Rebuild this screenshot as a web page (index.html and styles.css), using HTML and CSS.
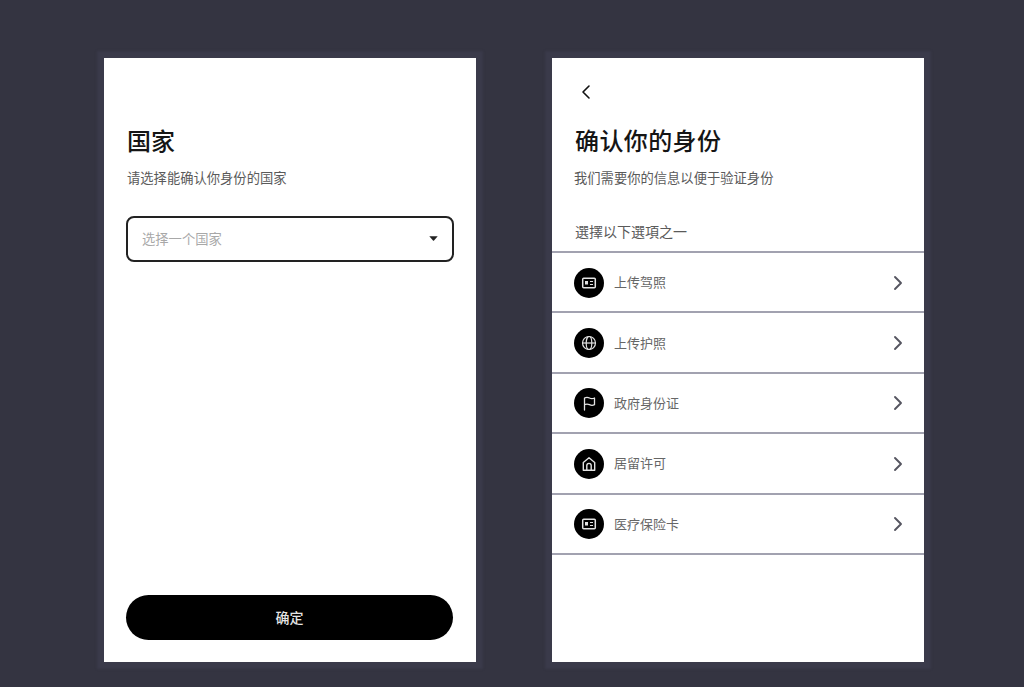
FILE: index.html
```html
<!DOCTYPE html>
<html lang="zh-CN">
<head>
<meta charset="utf-8">
<title>身份验证</title>
<link rel="stylesheet" href="styles.css">
</head>
<body>
<main class="stage">
  <section class="card card-country">
    <h1 class="title title-country">国家</h1>
    <p class="sub sub-country">请选择能确认你身份的国家</p>
    <div class="select">
      <span class="placeholder">选择一个国家</span>
      <svg class="caret" width="9" height="5" viewBox="0 0 9 5"><path d="M0.3 0.3H8.7L5 4.4Q4.5 4.9 4 4.4Z" fill="#222"/></svg>
    </div>
    <button class="primary">确定</button>
  </section>

  <section class="card card-id">
    <svg class="back" width="10" height="16" viewBox="0 0 10 16"><path d="M8 2L2 8L8 14" fill="none" stroke="#111" stroke-width="1.6" stroke-linecap="round" stroke-linejoin="round"/></svg>
    <h1 class="title title-id">确认你的身份</h1>
    <p class="sub sub-id">我们需要你的信息以便于验证身份</p>
    <h2 class="lead">選擇以下選項之一</h2>
    <ul class="list">
      <li class="row">
        <span class="badge"><svg width="16" height="16" viewBox="0 0 16 16" fill="none" stroke="#e4e4e4" stroke-width="1.5"><rect x="1.7" y="3.2" width="12.6" height="9.6" rx="1"/><rect x="4" y="6" width="3" height="3.5" fill="#e4e4e4" stroke="none"/><path d="M9 6.5H12M9 9.5H12" stroke-width="1.2"/></svg></span>
        <span class="label">上传驾照</span>
        <svg class="chev" width="10" height="16" viewBox="0 0 10 16"><path d="M2 2L8 8L2 14" fill="none" stroke="#555560" stroke-width="1.9" stroke-linecap="round" stroke-linejoin="round"/></svg>
      </li>
      <li class="row">
        <span class="badge"><svg width="16" height="16" viewBox="0 0 16 16" fill="none" stroke="#e4e4e4" stroke-width="1.2"><circle cx="8" cy="8" r="6.5"/><ellipse cx="8" cy="8" rx="2.8" ry="6.5"/><path d="M1.5 8H14.5"/></svg></span>
        <span class="label">上传护照</span>
        <svg class="chev" width="10" height="16" viewBox="0 0 10 16"><path d="M2 2L8 8L2 14" fill="none" stroke="#555560" stroke-width="1.9" stroke-linecap="round" stroke-linejoin="round"/></svg>
      </li>
      <li class="row">
        <span class="badge"><svg width="16" height="16" viewBox="0 0 16 16" fill="none" stroke="#e4e4e4" stroke-width="1.3" stroke-linejoin="round" stroke-linecap="round"><path d="M3.5 15V3Q6 1.6 8.5 3T13.5 3V9.7Q11 11 8.5 9.7T3.5 9.7"/></svg></span>
        <span class="label">政府身份证</span>
        <svg class="chev" width="10" height="16" viewBox="0 0 10 16"><path d="M2 2L8 8L2 14" fill="none" stroke="#555560" stroke-width="1.9" stroke-linecap="round" stroke-linejoin="round"/></svg>
      </li>
      <li class="row">
        <span class="badge"><svg width="16" height="16" viewBox="0 0 16 16" fill="none" stroke="#e4e4e4" stroke-width="1.4" stroke-linejoin="round"><path d="M2.3 6.5L8 1.8L13.7 6.5V14.2H2.3Z"/><path d="M5.8 14.2V9.6A2.2 2.2 0 0 1 10.2 9.6V14.2"/></svg></span>
        <span class="label">居留许可</span>
        <svg class="chev" width="10" height="16" viewBox="0 0 10 16"><path d="M2 2L8 8L2 14" fill="none" stroke="#555560" stroke-width="1.9" stroke-linecap="round" stroke-linejoin="round"/></svg>
      </li>
      <li class="row">
        <span class="badge"><svg width="16" height="16" viewBox="0 0 16 16" fill="none" stroke="#e4e4e4" stroke-width="1.5"><rect x="1.7" y="3.2" width="12.6" height="9.6" rx="1"/><rect x="4" y="6" width="3" height="3.5" fill="#e4e4e4" stroke="none"/><path d="M9 6.5H12M9 9.5H12" stroke-width="1.2"/></svg></span>
        <span class="label">医疗保险卡</span>
        <svg class="chev" width="10" height="16" viewBox="0 0 10 16"><path d="M2 2L8 8L2 14" fill="none" stroke="#555560" stroke-width="1.9" stroke-linecap="round" stroke-linejoin="round"/></svg>
      </li>
    </ul>
  </section>
</main>
</body>
</html>
```
FILE: styles.css
```css
* { box-sizing: border-box; }
html, body { margin: 0; height: 100%; overflow: hidden; }
body {
  background: #343441;
  font-family: "Noto Sans CJK SC", "Noto Sans", sans-serif;
}
.stage {
  display: flex;
  gap: 76px;
  padding: 58px 0 0 104px;
}
.card {
  width: 372px;
  height: 604px;
  background: #fff;
  box-shadow: 0 0 2px 7px #3a3a4a;
  display: flex;
  flex-direction: column;
}
.card-country { padding: 65px 22px 22px 22px; }
.card-id { padding: 26px 0 0; }
.title {
  margin: 0;
  font-size: 24px;
  line-height: 34px;
  font-weight: 500;
  color: #151515;
}
.title-country { margin-left: 1px; }
.sub {
  margin: 11px 0 0;
  font-size: 13.3px;
  line-height: 20px;
  color: #5a5a5a;
}
.sub-country { margin-left: 1px; }
.select {
  margin-top: 28px;
  height: 46px;
  border: 2px solid #222;
  border-radius: 8px;
  padding: 0 14px 2px 14px;
  display: flex;
  align-items: center;
  justify-content: space-between;
}
.placeholder { font-size: 13.3px; color: #a8a8a8; }
.primary {
  margin-top: auto;
  height: 45px;
  width: 327px;
  border: 0;
  border-radius: 23px;
  padding: 0 0 2px;
  background: #000;
  color: #e4e4e4;
  font: 500 14px "Noto Sans CJK SC", "Noto Sans", sans-serif;
}
.back { margin-left: 29px; flex: none; }
.title-id { margin: 23px 0 0 23px; letter-spacing: 0.4px; }
.sub-id { margin-left: 22px; }
.lead {
  margin: 33px 0 0 23px;
  font-size: 14px;
  line-height: 20px;
  font-weight: 400;
  color: #5a5a5a;
}
.list {
  list-style: none;
  margin: 10px 0 0;
  padding: 0;
  border-top: 2px solid #a2a2b0;
}
.row {
  height: 60.4px;
  padding: 1px 22px 0;
  display: flex;
  align-items: center;
  border-bottom: 2px solid #a2a2b0;
}
.badge {
  width: 30px;
  height: 30px;
  border-radius: 50%;
  background: #000;
  display: flex;
  align-items: center;
  justify-content: center;
  flex: none;
}
.label {
  margin-left: 10px;
  padding-bottom: 2px;
  font-size: 13px;
  color: #666;
  flex: 1;
}
.chev { flex: none; margin-right: -1px; }
```
